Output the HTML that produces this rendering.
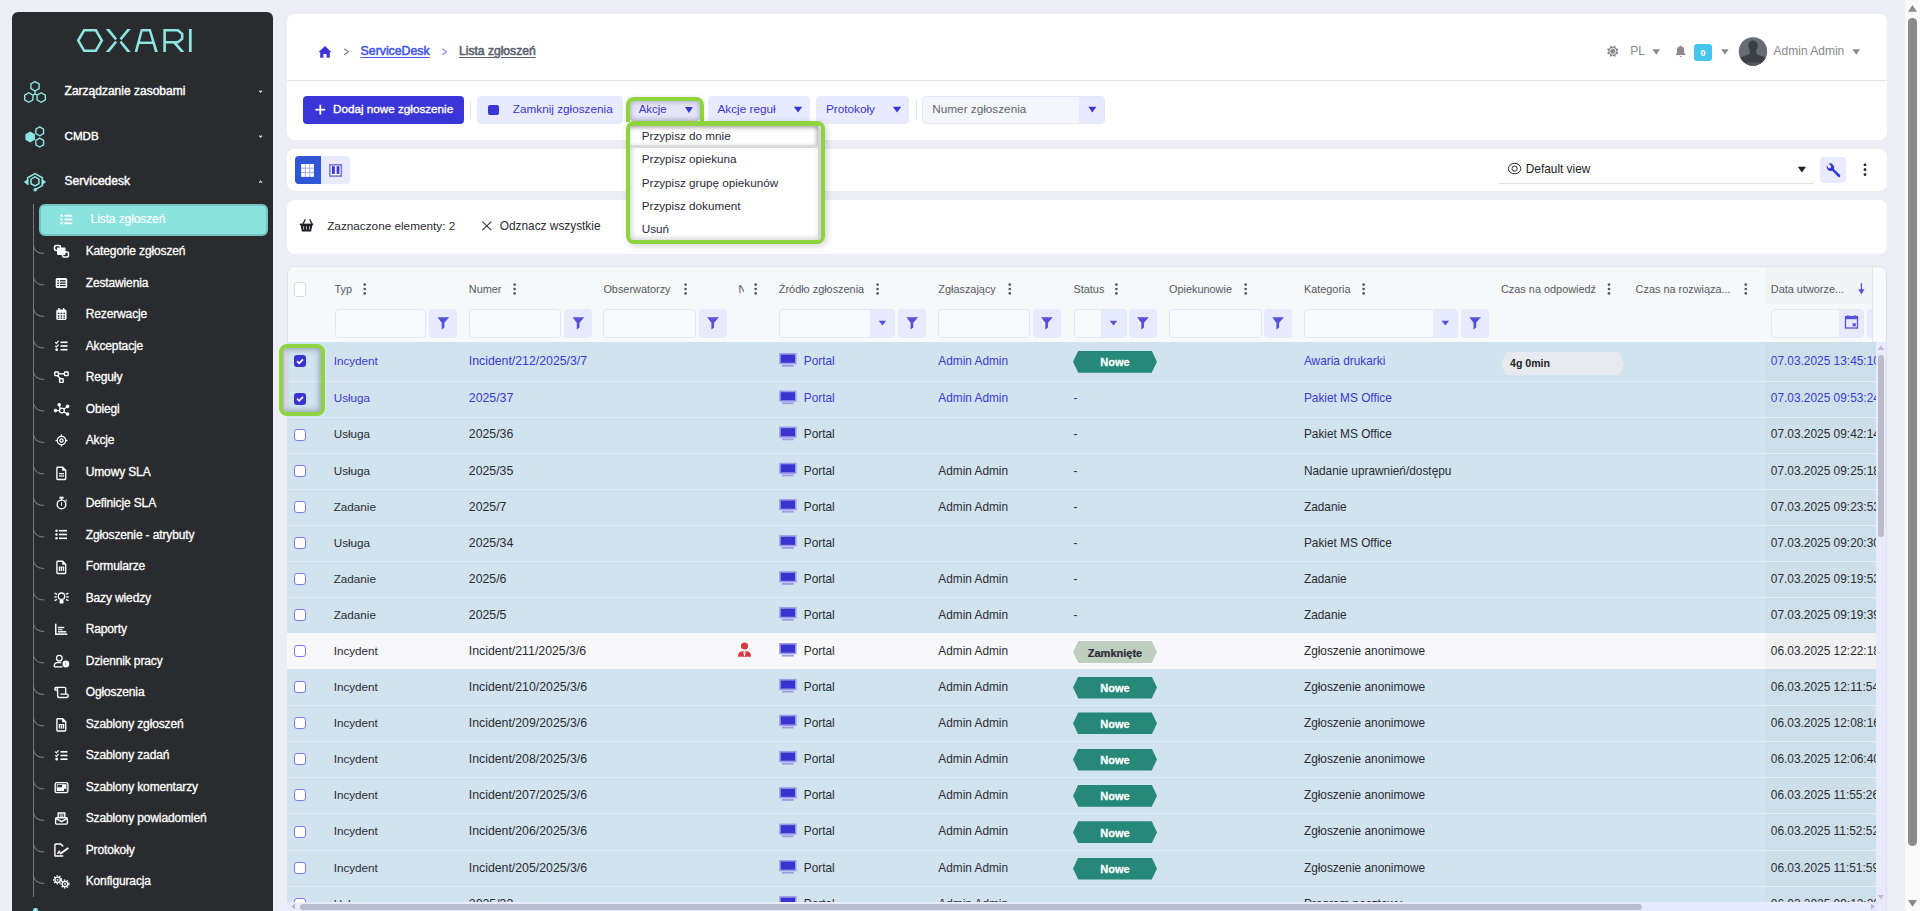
<!DOCTYPE html>
<html><head><meta charset="utf-8">
<style>
*{box-sizing:border-box;margin:0;padding:0}
html,body{width:1920px;height:911px;overflow:hidden}
body{position:relative;background:#ededf5;font-family:"Liberation Sans",sans-serif;}
.t{position:absolute;white-space:nowrap}
.abs{position:absolute}
.card{position:absolute;background:#fff;border-radius:8px}
svg{position:absolute;overflow:visible}
</style></head><body>

<div class="abs" style="left:12px;top:12px;width:261px;height:960px;background:#2a2b2e;border-radius:6px"></div>
<svg style="left:0;top:0" width="1920" height="911">
<g fill="none" stroke="#8de6e2" stroke-width="2.5">
<polygon points="78.2,40.5 84.1,30.3 95.9,30.3 101.8,40.5 95.9,50.7 84.1,50.7"/>
</g>
<g fill="#8de6e2">
<polygon points="105.8,29 109.4,29 117,38.6 115.2,40.2"/>
<polygon points="115.2,40.8 117,42.4 109.4,52 105.8,52"/>
<polygon points="130.8,29 127.2,29 119.6,38.6 121.4,40.2"/>
<polygon points="121.4,40.8 119.6,42.4 127.2,52 130.8,52"/>
<polygon points="134.6,52 140.8,29 150.8,29 157.8,52 155,52 149,31.6 142.6,31.6 137.3,52"/>
<rect x="138.3" y="41.6" width="15.6" height="2.4"/>
<rect x="163.3" y="29" width="2.6" height="23"/>
<rect x="188.9" y="29" width="2.8" height="23"/>
<rect x="174.4" y="42" width="1" height="1"/>
<polygon points="173,43 176.6,43 184.4,52 180.8,52"/>
</g>
<g fill="none" stroke="#8de6e2" stroke-width="2.5">
<polyline points="164.6,30.2 177.8,30.2 182.2,33.8 182.2,38.6 177.8,42.3 164.6,42.3"/>
</g></svg>
<svg style="left:0;top:0" width="1920" height="911"><g fill="none" stroke="#8de6e2" stroke-width="1.4" transform="translate(0,0)">
<polygon points="39.11,88.67 35.00,91.05 30.89,88.67 30.89,83.92 35.00,81.55 39.11,83.92"/>
<polygon points="32.91,99.88 28.80,102.25 24.69,99.88 24.69,95.12 28.80,92.75 32.91,95.12"/>
<polygon points="45.31,99.88 41.20,102.25 37.09,99.88 37.09,95.12 41.20,92.75 45.31,95.12"/>
<polyline points="32.9,95.2 35,94 37.1,95.2"/>
<line x1="35" y1="91" x2="35" y2="94"/>
<polygon points="43.55,133.53 39.70,135.75 35.85,133.53 35.85,129.08 39.70,126.85 43.55,129.08"/>
<polygon points="43.55,144.82 39.70,147.05 35.85,144.82 35.85,140.38 39.70,138.15 43.55,140.38"/>
</g>
<polygon fill="#8de6e2" points="34.96,139.65 30.20,142.40 25.44,139.65 25.44,134.15 30.20,131.40 34.96,134.15"/>
<g fill="none" stroke="#8de6e2" stroke-width="1.5">
<path d="M27.6,184.8 V177.8 L35,173.6 L42.4,177.8 V185.6 L35.6,189.4"/>
<polygon points="38.98,183.70 35.00,186.00 31.02,183.70 31.02,179.10 35.00,176.80 38.98,179.10"/>
</g>
<polygon fill="#8de6e2" points="23.8,182 28.4,178.8 28.4,185.2"/>
<polygon fill="#8de6e2" points="46.2,182 41.6,178.8 41.6,185.2"/>
<circle fill="#8de6e2" cx="35.2" cy="189.8" r="1.8"/>
</svg>
<div class="t" style="left:64.6px;top:82.8px;font-size:12px;line-height:16px;color:#ffffff;font-weight:normal;-webkit-text-stroke:0.4px #ffffff;">Zarządzanie zasobami</div>
<div class="t" style="left:64.6px;top:128.0px;font-size:11.6px;line-height:16px;color:#ffffff;font-weight:normal;-webkit-text-stroke:0.4px #ffffff;">CMDB</div>
<div class="t" style="left:64.6px;top:173.0px;font-size:12px;line-height:16px;color:#ffffff;font-weight:normal;-webkit-text-stroke:0.4px #ffffff;">Servicedesk</div>
<svg style="left:0;top:0" width="1920" height="911"><g fill="none" stroke="#d8d8d8" stroke-width="1.3">
<polyline points="259.2,90.6 260.6,92 262,90.6"/>
<polyline points="259.2,135.6 260.6,137 262,135.6"/>
<polyline points="259.2,182.6 260.6,181.2 262,182.6"/>

</g></svg>
<div class="abs" style="left:32.6px;top:204px;width:1.2px;height:693px;background:#777777"></div>
<div class="abs" style="left:39px;top:204px;width:229px;height:32px;background:#8ae3de;border:2px solid #74c4bf;border-radius:6px"></div>
<div class="t" style="left:90.6px;top:210.9px;font-size:12px;line-height:16px;color:#ffffff;font-weight:normal;-webkit-text-stroke:0.15px #ffffff;letter-spacing:-0.1px;">Lista zgłoszeń</div>
<div class="t" style="left:85.7px;top:243.0px;font-size:12px;line-height:16px;color:#ffffff;font-weight:normal;-webkit-text-stroke:0.3px #ffffff;letter-spacing:-0.13px;">Kategorie zgłoszeń</div>
<div class="t" style="left:85.7px;top:274.5px;font-size:12px;line-height:16px;color:#ffffff;font-weight:normal;-webkit-text-stroke:0.3px #ffffff;letter-spacing:-0.13px;">Zestawienia</div>
<div class="t" style="left:85.7px;top:306.0px;font-size:12px;line-height:16px;color:#ffffff;font-weight:normal;-webkit-text-stroke:0.3px #ffffff;letter-spacing:-0.13px;">Rezerwacje</div>
<div class="t" style="left:85.7px;top:337.5px;font-size:12px;line-height:16px;color:#ffffff;font-weight:normal;-webkit-text-stroke:0.3px #ffffff;letter-spacing:-0.13px;">Akceptacje</div>
<div class="t" style="left:85.7px;top:369.0px;font-size:12px;line-height:16px;color:#ffffff;font-weight:normal;-webkit-text-stroke:0.3px #ffffff;letter-spacing:-0.13px;">Reguły</div>
<div class="t" style="left:85.7px;top:400.5px;font-size:12px;line-height:16px;color:#ffffff;font-weight:normal;-webkit-text-stroke:0.3px #ffffff;letter-spacing:-0.13px;">Obiegi</div>
<div class="t" style="left:85.7px;top:432.0px;font-size:12px;line-height:16px;color:#ffffff;font-weight:normal;-webkit-text-stroke:0.3px #ffffff;letter-spacing:-0.13px;">Akcje</div>
<div class="t" style="left:85.7px;top:463.5px;font-size:12px;line-height:16px;color:#ffffff;font-weight:normal;-webkit-text-stroke:0.3px #ffffff;letter-spacing:-0.13px;">Umowy SLA</div>
<div class="t" style="left:85.7px;top:495.0px;font-size:12px;line-height:16px;color:#ffffff;font-weight:normal;-webkit-text-stroke:0.3px #ffffff;letter-spacing:-0.13px;">Definicje SLA</div>
<div class="t" style="left:85.7px;top:526.5px;font-size:12px;line-height:16px;color:#ffffff;font-weight:normal;-webkit-text-stroke:0.3px #ffffff;letter-spacing:-0.13px;">Zgłoszenie - atrybuty</div>
<div class="t" style="left:85.7px;top:558.0px;font-size:12px;line-height:16px;color:#ffffff;font-weight:normal;-webkit-text-stroke:0.3px #ffffff;letter-spacing:-0.13px;">Formularze</div>
<div class="t" style="left:85.7px;top:589.5px;font-size:12px;line-height:16px;color:#ffffff;font-weight:normal;-webkit-text-stroke:0.3px #ffffff;letter-spacing:-0.13px;">Bazy wiedzy</div>
<div class="t" style="left:85.7px;top:621.0px;font-size:12px;line-height:16px;color:#ffffff;font-weight:normal;-webkit-text-stroke:0.3px #ffffff;letter-spacing:-0.13px;">Raporty</div>
<div class="t" style="left:85.7px;top:652.5px;font-size:12px;line-height:16px;color:#ffffff;font-weight:normal;-webkit-text-stroke:0.3px #ffffff;letter-spacing:-0.13px;">Dziennik pracy</div>
<div class="t" style="left:85.7px;top:684.0px;font-size:12px;line-height:16px;color:#ffffff;font-weight:normal;-webkit-text-stroke:0.3px #ffffff;letter-spacing:-0.13px;">Ogłoszenia</div>
<div class="t" style="left:85.7px;top:715.5px;font-size:12px;line-height:16px;color:#ffffff;font-weight:normal;-webkit-text-stroke:0.3px #ffffff;letter-spacing:-0.13px;">Szablony zgłoszeń</div>
<div class="t" style="left:85.7px;top:747.0px;font-size:12px;line-height:16px;color:#ffffff;font-weight:normal;-webkit-text-stroke:0.3px #ffffff;letter-spacing:-0.13px;">Szablony zadań</div>
<div class="t" style="left:85.7px;top:778.5px;font-size:12px;line-height:16px;color:#ffffff;font-weight:normal;-webkit-text-stroke:0.3px #ffffff;letter-spacing:-0.13px;">Szablony komentarzy</div>
<div class="t" style="left:85.7px;top:810.0px;font-size:12px;line-height:16px;color:#ffffff;font-weight:normal;-webkit-text-stroke:0.3px #ffffff;letter-spacing:-0.13px;">Szablony powiadomień</div>
<div class="t" style="left:85.7px;top:841.5px;font-size:12px;line-height:16px;color:#ffffff;font-weight:normal;-webkit-text-stroke:0.3px #ffffff;letter-spacing:-0.13px;">Protokoły</div>
<div class="t" style="left:85.7px;top:873.0px;font-size:12px;line-height:16px;color:#ffffff;font-weight:normal;-webkit-text-stroke:0.3px #ffffff;letter-spacing:-0.13px;">Konfiguracja</div>
<svg style="left:0;top:0" width="1920" height="911"><g fill="none" stroke="#7a7a7a" stroke-width="1.1"><path d="M33.3,245.0 Q34.5,253.5 44.3,253.5"/><path d="M33.3,276.5 Q34.5,285.0 44.3,285.0"/><path d="M33.3,308.0 Q34.5,316.5 44.3,316.5"/><path d="M33.3,339.5 Q34.5,348.0 44.3,348.0"/><path d="M33.3,371.0 Q34.5,379.5 44.3,379.5"/><path d="M33.3,402.5 Q34.5,411.0 44.3,411.0"/><path d="M33.3,434.0 Q34.5,442.5 44.3,442.5"/><path d="M33.3,465.5 Q34.5,474.0 44.3,474.0"/><path d="M33.3,497.0 Q34.5,505.5 44.3,505.5"/><path d="M33.3,528.5 Q34.5,537.0 44.3,537.0"/><path d="M33.3,560.0 Q34.5,568.5 44.3,568.5"/><path d="M33.3,591.5 Q34.5,600.0 44.3,600.0"/><path d="M33.3,623.0 Q34.5,631.5 44.3,631.5"/><path d="M33.3,654.5 Q34.5,663.0 44.3,663.0"/><path d="M33.3,686.0 Q34.5,694.5 44.3,694.5"/><path d="M33.3,717.5 Q34.5,726.0 44.3,726.0"/><path d="M33.3,749.0 Q34.5,757.5 44.3,757.5"/><path d="M33.3,780.5 Q34.5,789.0 44.3,789.0"/><path d="M33.3,812.0 Q34.5,820.5 44.3,820.5"/><path d="M33.3,843.5 Q34.5,852.0 44.3,852.0"/><path d="M33.3,875.0 Q34.5,883.5 44.3,883.5"/></g></svg>
<svg style="left:0;top:0" width="1920" height="911"><g fill="#ffffff"><circle cx="61.6" cy="215.7" r="1.3"/><circle cx="61.6" cy="219.5" r="1.3"/><circle cx="61.6" cy="223.3" r="1.3"/><rect x="64.5" y="214.8" width="7.8" height="1.8"/><rect x="64.5" y="218.6" width="7.8" height="1.8"/><rect x="64.5" y="222.4" width="7.8" height="1.8"/></g><g fill="none" stroke="#ffffff" stroke-width="1.5"><rect x="54.5" y="245.5" width="6" height="5" rx="1.5"/><rect x="62.5" y="252.0" width="6" height="5" rx="1.5"/></g><rect fill="#ffffff" x="57" y="247.5" width="8.5" height="7.5" rx="1"/><g><rect x="55.7" y="277.9" width="11.5" height="10" rx="1.5" fill="#ffffff"/><g fill="#2a2b2e"><rect x="57.3" y="280.1" width="1.6" height="1.3"/><rect x="60" y="280.1" width="5.7" height="1.3"/><rect x="57.3" y="282.5" width="1.6" height="1.3"/><rect x="60" y="282.5" width="5.7" height="1.3"/><rect x="57.3" y="284.9" width="1.6" height="1.3"/><rect x="60" y="284.9" width="5.7" height="1.3"/></g></g><g><rect x="56.3" y="309.5" width="10.2" height="10.5" rx="1.5" fill="#ffffff"/><g fill="#2a2b2e"><rect x="57.8" y="312.7" width="1.6" height="1.4"/><rect x="60.6" y="312.7" width="1.6" height="1.4"/><rect x="63.4" y="312.7" width="1.6" height="1.4"/><rect x="57.8" y="315.3" width="1.6" height="1.4"/><rect x="60.6" y="315.3" width="1.6" height="1.4"/><rect x="63.4" y="315.3" width="1.6" height="1.4"/><rect x="57.8" y="317.6" width="1.6" height="1.2"/><rect x="60.6" y="317.6" width="1.6" height="1.2"/><rect x="63.4" y="317.6" width="1.6" height="1.2"/></g><rect x="58.3" y="308.0" width="1.4" height="2.5" fill="#ffffff"/><rect x="63" y="308.0" width="1.4" height="2.5" fill="#ffffff"/></g><g fill="#ffffff"><rect x="60.5" y="341.5" width="7" height="1.6"/><rect x="60.5" y="345.2" width="7" height="1.6"/><rect x="60.5" y="348.9" width="7" height="1.6"/></g><g fill="none" stroke="#ffffff" stroke-width="1.2"><polyline points="55.2,342.1 56.4,343.3 58.6,340.9"/><polyline points="55.2,345.8 56.4,347.0 58.6,344.6"/><circle cx="56.7" cy="349.7" r="0.8"/></g><g fill="none" stroke="#ffffff" stroke-width="1.4"><rect x="54.8" y="372.0" width="3.6" height="3.6" rx="0.6"/><rect x="64.5" y="372.0" width="3.6" height="3.6" rx="0.6"/><rect x="59.6" y="378.8" width="3.6" height="3.6" rx="0.6"/><line x1="58.4" y1="373.8" x2="64.5" y2="373.8"/><line x1="57.2" y1="375.6" x2="60.5" y2="378.8"/></g><circle cx="61.9" cy="410.60" r="2.4" fill="none" stroke="#ffffff" stroke-width="1.3"/><g stroke="#ffffff" stroke-width="1.2"><line x1="60.3" y1="408.80" x2="59.2" y2="404.80"/><line x1="63.8" y1="409.30" x2="67.6" y2="406.40"/><line x1="59.5" y1="410.60" x2="55.5" y2="410.60"/><line x1="63.8" y1="412.00" x2="67.6" y2="414.10"/></g><g fill="#ffffff"><circle cx="59.2" cy="404.80" r="1.8"/><circle cx="67.6" cy="406.40" r="1.8"/><circle cx="55.5" cy="410.60" r="1.8"/><circle cx="67.6" cy="414.10" r="1.8"/></g><g fill="none" stroke="#ffffff" stroke-width="1.3"><circle cx="61.5" cy="440.5" r="4.2"/><circle cx="61.5" cy="440.5" r="1.6"/><line x1="61.5" y1="434.5" x2="61.5" y2="436.3"/><line x1="61.5" y1="444.7" x2="61.5" y2="446.5"/><line x1="55.5" y1="440.5" x2="57.3" y2="440.5"/><line x1="65.7" y1="440.5" x2="67.5" y2="440.5"/></g><path fill="none" stroke="#ffffff" stroke-width="1.35" d="M57.7,467.20 h4.9 l3.1,3.1 v8.4 a0.8,0.8 0 0 1 -0.8,0.8 h-7.2 a0.8,0.8 0 0 1 -0.8,-0.8 v-10.7 a0.8,0.8 0 0 1 0.8,-0.8z"/><path fill="#ffffff" d="M62.2,467.20 l3.5,3.5 h-3.5z"/><g fill="#ffffff"><rect x="59" y="473.10" width="5" height="1.2"/><rect x="59" y="475.40" width="5" height="1.2"/></g><g fill="none" stroke="#ffffff" stroke-width="1.4"><circle cx="61.5" cy="504.40" r="4.3"/></g><rect fill="#ffffff" x="59.4" y="496.70" width="4.2" height="2"/><rect fill="#ffffff" x="61" y="498.50" width="1" height="1.5"/><rect fill="#ffffff" x="61.1" y="502.30" width="0.9" height="3.4"/><rect fill="#ffffff" x="65.6" y="499.60" width="1.2" height="1.8"/><g fill="#ffffff"><circle cx="56.5" cy="530.7" r="1.2"/><circle cx="56.5" cy="534.5" r="1.2"/><circle cx="56.5" cy="538.3" r="1.2"/><rect x="59" y="529.9" width="8" height="1.6"/><rect x="59" y="533.7" width="8" height="1.6"/><rect x="59" y="537.5" width="8" height="1.6"/></g><path fill="none" stroke="#ffffff" stroke-width="1.35" d="M57.7,561.20 h4.9 l3.1,3.1 v8.4 a0.8,0.8 0 0 1 -0.8,0.8 h-7.2 a0.8,0.8 0 0 1 -0.8,-0.8 v-10.7 a0.8,0.8 0 0 1 0.8,-0.8z"/><path fill="#ffffff" d="M62.2,561.20 l3.5,3.5 h-3.5z"/><rect x="58.8" y="566.60" width="5.4" height="4.4" fill="#ffffff"/><g fill="#2a2b2e"><rect x="60.3" y="567.50" width="0.7" height="3.5"/><rect x="62" y="567.50" width="0.7" height="3.5"/></g><g fill="none" stroke="#ffffff" stroke-width="1.3"><circle cx="61.5" cy="596.20" r="3.2"/></g><g stroke="#ffffff" stroke-width="1.3"><line x1="54.3" y1="596.90" x2="56.8" y2="596.90"/><line x1="66.2" y1="596.90" x2="68.7" y2="596.90"/><line x1="54.6" y1="593.10" x2="57" y2="594.30"/><line x1="68.4" y1="593.10" x2="66" y2="594.30"/><line x1="54.6" y1="600.60" x2="57" y2="599.40"/><line x1="68.4" y1="600.60" x2="66" y2="599.40"/></g><rect fill="#ffffff" x="59.5" y="600.10" width="4" height="3.5" rx="0.8"/><g fill="#ffffff"><rect x="55" y="623.70" width="1.5" height="11.2"/><rect x="55" y="633.40" width="12.3" height="1.5"/><rect x="58" y="626.80" width="6.3" height="1.4"/><rect x="58" y="628.90" width="4.6" height="1.4" opacity="0.8"/><rect x="58" y="631.10" width="8.2" height="1.4"/></g><g fill="none" stroke="#ffffff" stroke-width="1.3"><circle cx="59.3" cy="658.20" r="2.8"/><path d="M54.3,666.90 v-1.2 a3,3 0 0 1 3,-3 h4"/><line x1="54.3" y1="666.90" x2="62.5" y2="666.90"/></g><circle fill="#ffffff" cx="65.9" cy="664.00" r="3.4"/><path fill="none" stroke="#b88" stroke-width="0.8" d="M65.4,662.30 v2 h1.1"/><g fill="none" stroke="#ffffff" stroke-width="1.35"><path d="M57.6,689.50 V696.00 a1.5,1.5 0 0 0 1.5,1.5 h7.5 a1.7,1.7 0 0 0 0,-3.4 h-6.3"/><path d="M56.3,687.30 h8.4 a1,1 0 0 1 1,1 v5.6"/><circle cx="56.2" cy="688.90" r="1.4"/></g><path fill="none" stroke="#ffffff" stroke-width="1.35" d="M57.7,718.70 h4.9 l3.1,3.1 v8.4 a0.8,0.8 0 0 1 -0.8,0.8 h-7.2 a0.8,0.8 0 0 1 -0.8,-0.8 v-10.7 a0.8,0.8 0 0 1 0.8,-0.8z"/><path fill="#ffffff" d="M62.2,718.70 l3.5,3.5 h-3.5z"/><rect x="58.8" y="724.10" width="5.4" height="4.4" fill="#ffffff"/><g fill="#2a2b2e"><rect x="60.3" y="725.00" width="0.7" height="3.5"/><rect x="62" y="725.00" width="0.7" height="3.5"/></g><g fill="#ffffff"><rect x="60.5" y="751.0" width="7" height="1.6"/><rect x="60.5" y="754.7" width="7" height="1.6"/><rect x="60.5" y="758.4" width="7" height="1.6"/></g><g fill="none" stroke="#ffffff" stroke-width="1.2"><polyline points="55.2,751.6 56.4,752.8 58.6,750.4"/><polyline points="55.2,755.3 56.4,756.5 58.6,754.1"/><circle cx="56.7" cy="759.2" r="0.8"/></g><rect x="55.2" y="782.60" width="12.7" height="10" rx="1.6" fill="none" stroke="#ffffff" stroke-width="1.35"/><rect x="56.8" y="784.20" width="9.6" height="6.9" fill="#ffffff"/><rect x="57.5" y="784.90" width="4.6" height="2.4" fill="#2a2b2e"/><rect x="64" y="788.90" width="2.4" height="2.2" fill="#2a2b2e"/><g fill="none" stroke="#ffffff" stroke-width="1.35"><path d="M58.2,817.50 V813.00 h6.6 V817.50"/><rect x="55.6" y="817.70" width="11.8" height="6.4" rx="1"/><polyline points="56.2,818.60 61.5,821.60 66.8,818.60"/></g><g fill="#ffffff"><rect x="59.6" y="814.50" width="3.8" height="1"/><rect x="59.6" y="816.40" width="3.8" height="1"/></g><g fill="none" stroke="#ffffff" stroke-width="1.4"><path d="M63.3,856.00 h-7.6 a0.8,0.8 0 0 1 -0.8,-0.8 v-10.4 a0.8,0.8 0 0 1 0.8,-0.8 h5 l2.6,2.6"/><path d="M57.5,854.00 l1.6,-2.8 1.2,1.6"/></g><path fill="none" stroke="#ffffff" stroke-width="2" d="M60,854.00 L68.3,848.00"/><g fill="none" stroke="#ffffff" stroke-width="1.3"><circle cx="57.6" cy="879.80" r="2.7"/><circle cx="65" cy="884.00" r="2.7"/></g><g fill="none" stroke="#ffffff" stroke-width="1.4" stroke-dasharray="1.3 1.5"><circle cx="57.6" cy="879.80" r="3.9"/><circle cx="65" cy="884.00" r="3.9"/></g><circle cx="57.6" cy="879.80" r="0.9" fill="#ffffff"/><circle cx="65" cy="884.00" r="0.9" fill="#ffffff"/></svg>
<div class="abs" style="left:33px;top:908px;width:5px;height:4px;background:#8de6e2;border-radius:2px 2px 0 0"></div>
<div class="card" style="left:287px;top:14px;width:1600px;height:126px"></div>
<div class="abs" style="left:287px;top:80px;width:1600px;height:1px;background:#e2e4ec"></div>
<svg style="left:0;top:0" width="1920" height="911">
<path fill="#3a35d6" d="M325,46 L331.6,52.2 L329.8,52.2 L329.8,57.8 L326.6,57.8 L326.6,54 L323.4,54 L323.4,57.8 L320.2,57.8 L320.2,52.2 L318.4,52.2 Z"/>
<polyline fill="none" stroke="#777" stroke-width="1.1" points="344.2,48.8 348.4,51.8 344.2,54.8"/>
<polyline fill="none" stroke="#8b86e8" stroke-width="1.1" points="442.3,48.8 446.5,51.8 442.3,54.8"/>
</svg>
<div class="t" style="left:360.6px;top:43.0px;font-size:12.3px;line-height:16px;color:#4457ee;font-weight:normal;-webkit-text-stroke:0.55px #4457ee;text-decoration:underline;text-underline-offset:2px">ServiceDesk</div>
<div class="t" style="left:459px;top:43.0px;font-size:12.1px;line-height:16px;color:#5a606c;font-weight:normal;-webkit-text-stroke:0.55px #5a606c;text-decoration:underline;text-underline-offset:2px">Lista zgłoszeń</div>
<svg style="left:0;top:0" width="1920" height="911">
<polygon fill="#8a8a8a" points="1615.21,45.43 1615.84,48.21 1618.62,48.84 1617.10,51.25 1618.62,53.66 1615.84,54.29 1615.21,57.07 1612.80,55.55 1610.39,57.07 1609.76,54.29 1606.98,53.66 1608.50,51.25 1606.98,48.84 1609.76,48.21 1610.39,45.43 1612.80,46.95"/><circle cx="1612.8" cy="51.25" r="3" fill="none" stroke="#fff" stroke-width="0.9"/><circle cx="1612.8" cy="51.25" r="1.9" fill="#8a8a8a"/>
<polygon fill="#8a8a8a" points="1652.5,49.3 1660,49.3 1656.25,54.8"/>
<path fill="#8a8a8a" d="M1680.6,45.3 l0.6,1 a3.7,3.7 0 0 1 3,3.6 v3.2 l1.6,1.8 v0.2 h-10.4 v-0.2 l1.6,-1.8 v-3.2 a3.7,3.7 0 0 1 3,-3.6z M1679.6,56 h2 l-0.4,1.1 h-1.2z"/>
<polygon fill="#8a8a8a" points="1721.2,49.3 1728.7,49.3 1724.95,54.8"/>
<polygon fill="#8a8a8a" points="1852.5,49.3 1860,49.3 1856.25,54.8"/>
<defs><clipPath id="av"><circle cx="1753" cy="51.4" r="14.2"/></clipPath></defs>
<circle cx="1753" cy="51.4" r="14.2" fill="#666c74"/>
<g clip-path="url(#av)" fill="#3c3f43"><path d="M1753,40.6 c3,0 4.6,2.2 4.6,5.2 c0,3.4 -1.8,6.4 -4.6,6.4 c-2.8,0 -4.6,-3 -4.6,-6.4 c0,-3 1.6,-5.2 4.6,-5.2z"/><path d="M1749.8,51 v3.2 l-7,2.4 c-2.2,0.8 -3,2.5 -3.2,4.6 v6 h27 v-6 c-0.2,-2.1 -1,-3.8 -3.2,-4.6 l-7,-2.4 v-3.2 z"/><rect x="1738" y="62.5" width="30" height="5" fill="#54585d"/></g>
</svg>
<div class="abs" style="left:1694px;top:44px;width:18px;height:17px;background:#46c6ee;border-radius:3px"></div>
<div class="t" style="left:1694px;top:44.8px;font-size:9px;line-height:16px;color:#ffffff;font-weight:bold;width:18px;text-align:center">0</div>
<div class="t" style="left:1630.3px;top:42.8px;font-size:12px;line-height:16px;color:#8a8a8a;font-weight:normal;">PL</div>
<div class="t" style="left:1773.6px;top:42.9px;font-size:12px;line-height:16px;color:#8a8a8a;font-weight:normal;">Admin Admin</div>
<div class="abs" style="left:303px;top:96px;width:161px;height:28px;background:#3a35d6;border-radius:4px"></div>
<svg style="left:0;top:0" width="1920" height="911"><g stroke="#fff" stroke-width="1.8"><line x1="320.3" y1="104.8" x2="320.3" y2="114.6"/><line x1="315.4" y1="109.7" x2="325.2" y2="109.7"/></g></svg>
<div class="t" style="left:333px;top:100.6px;font-size:11.7px;line-height:16px;color:#ffffff;font-weight:normal;-webkit-text-stroke:0.35px #ffffff;">Dodaj nowe zgłoszenie</div>
<div class="abs" style="left:470px;top:101px;width:1px;height:18px;background:#e3e4ea"></div>
<div class="abs" style="left:477px;top:96px;width:145.5px;height:28px;background:#e8ebfd;border-radius:4px"></div>
<div class="abs" style="left:488px;top:104.6px;width:11px;height:10px;background:#3a35d6;border-radius:2px"></div>
<div class="t" style="left:512.8px;top:100.6px;font-size:11.75px;line-height:16px;color:#3a35d6;font-weight:normal;">Zamknij zgłoszenia</div>
<div class="abs" style="left:629.6px;top:101.3px;width:70.8px;height:20.2px;background:#e4e6f8;border-radius:3px;box-shadow:inset 0 0 5px 1px rgba(60,60,90,0.32)"></div>
<div class="abs" style="left:625.6px;top:97.3px;width:78.8px;height:25px;border:4px solid #8dd43f;border-bottom:0;border-radius:8px 8px 0 0;box-shadow:0 0 4px rgba(0,0,0,0.12)"></div>
<div class="t" style="left:638.7px;top:100.6px;font-size:11.4px;line-height:16px;color:#3a35d6;font-weight:normal;">Akcje</div>
<svg style="left:0;top:0" width="1920" height="911"><polygon fill="#3a35d6" points="684.9,107.1 693,107.1 688.95,113"/></svg>
<div class="abs" style="left:708px;top:96px;width:102px;height:28px;background:#e8ebfd;border-radius:4px"></div>
<div class="t" style="left:717.5px;top:100.6px;font-size:11.75px;line-height:16px;color:#3a35d6;font-weight:normal;">Akcje reguł</div>
<svg style="left:0;top:0" width="1920" height="911"><polygon fill="#3a35d6" points="793.8,106.8 802.3,106.8 798.05,112.6"/></svg>
<div class="abs" style="left:816px;top:96px;width:92.5px;height:28px;background:#e8ebfd;border-radius:4px"></div>
<div class="t" style="left:826px;top:100.6px;font-size:11.75px;line-height:16px;color:#3a35d6;font-weight:normal;">Protokoły</div>
<svg style="left:0;top:0" width="1920" height="911"><polygon fill="#3a35d6" points="892.8,106.8 901.3,106.8 897.05,112.6"/></svg>
<div class="abs" style="left:915.5px;top:101px;width:1px;height:18px;background:#e3e4ea"></div>
<div class="abs" style="left:922px;top:96px;width:182.5px;height:28px;background:#f5f6fb;border:1px solid #e4e7f7;border-radius:4px;overflow:hidden"><div class="abs" style="right:0;top:0;width:25px;height:26px;background:#e8ebfd"></div></div>
<div class="t" style="left:932.3px;top:100.6px;font-size:11.75px;line-height:16px;color:#62656d;font-weight:normal;">Numer zgłoszenia</div>
<svg style="left:0;top:0" width="1920" height="911"><polygon fill="#3a35d6" points="1088.3,106.8 1096.3,106.8 1092.3,112.6"/></svg>
<div class="card" style="left:287px;top:149px;width:1600px;height:42px"></div>
<div class="abs" style="left:294.5px;top:156.3px;width:55.3px;height:27.4px;background:#e8ebfd;border-radius:4px;overflow:hidden"><div class="abs" style="left:0;top:0;width:26.5px;height:27.4px;background:#2f56d4"></div></div>
<svg style="left:0;top:0" width="1920" height="911">
<rect x="301.2" y="164" width="12.7" height="12.8" fill="#8ea3ea"/>
<g fill="#fff">
<rect x="301.2" y="164" width="3.7" height="3.7"/><rect x="305.7" y="164" width="3.7" height="3.7"/><rect x="310.2" y="164" width="3.7" height="3.7"/>
<rect x="301.2" y="168.55" width="3.7" height="3.7"/><rect x="305.7" y="168.55" width="3.7" height="3.7"/><rect x="310.2" y="168.55" width="3.7" height="3.7"/>
<rect x="301.2" y="173.1" width="3.7" height="3.7"/><rect x="305.7" y="173.1" width="3.7" height="3.7"/><rect x="310.2" y="173.1" width="3.7" height="3.7"/>
</g>
<rect x="329.9" y="164.8" width="11.4" height="11.3" fill="#fff" stroke="#7b78e0" stroke-width="1.6"/>
<rect x="331.9" y="166.2" width="2.9" height="7.7" fill="#3a35d6"/><rect x="336.6" y="166.2" width="2.8" height="7.7" fill="#3a35d6"/>
</svg>
<svg style="left:0;top:0" width="1920" height="911">
<g fill="none" stroke="#2a2a2a" stroke-width="1"><ellipse cx="1514.6" cy="168.6" rx="6.2" ry="5.2"/><circle cx="1514.6" cy="168.6" r="2.6"/></g>
<polygon fill="#222" points="1797.8,166.8 1806,166.8 1801.9,172.6"/>
</svg>
<div class="t" style="left:1525.8px;top:161.0px;font-size:11.85px;line-height:16px;color:#222222;font-weight:normal;">Default view</div>
<div class="abs" style="left:1499px;top:183px;width:315px;height:1px;background:#dfe2ea"></div>
<div class="abs" style="left:1820px;top:157px;width:26px;height:26px;background:#e8ebfd;border-radius:4px"></div>
<svg style="left:0;top:0" width="1920" height="911">
<path fill="#3a35d6" d="M1826.8,165.4 a4.2,4.2 0 0 0 5.4,5.3 l5.8,6 a1.3,1.3 0 0 0 1.9,-1.9 l-6,-5.8 a4.2,4.2 0 0 0 -5.3,-5.4 l2.6,2.6 -0.6,1.8 -1.8,0.6z"/>
<g fill="#222"><circle cx="1865" cy="164.8" r="1.4"/><circle cx="1865" cy="169.7" r="1.4"/><circle cx="1865" cy="174.6" r="1.4"/></g>
</svg>
<div class="card" style="left:287px;top:200px;width:1600px;height:54px"></div>
<svg style="left:0;top:0" width="1920" height="911">
<rect x="299.8" y="223.6" width="13.4" height="1.6" fill="#1e1f24"/>
<path fill="#1e1f24" d="M300.6,225 h11.8 l-1.3,6.5 h-9.2z"/>
<g fill="#c8c8cc"><rect x="303.2" y="226.2" width="0.9" height="3.4"/><rect x="306.1" y="226.2" width="0.9" height="3.4"/><rect x="309" y="226.2" width="0.9" height="3.4"/></g>
<g stroke="#1e1f24" stroke-width="1.3"><line x1="302.9" y1="224" x2="305.4" y2="219.3"/><line x1="309.6" y1="219.3" x2="312.1" y2="224"/></g>
<g stroke="#333" stroke-width="1.1"><line x1="482.3" y1="221.6" x2="491.3" y2="230.2"/><line x1="491.3" y1="221.6" x2="482.3" y2="230.2"/></g>
</svg>
<div class="t" style="left:327.2px;top:218.0px;font-size:11.75px;line-height:16px;color:#2b2b33;font-weight:normal;">Zaznaczone elementy: 2</div>
<div class="t" style="left:499.8px;top:218.0px;font-size:11.85px;line-height:16px;color:#2b2b33;font-weight:normal;">Odznacz wszystkie</div>
<div class="abs" style="left:287px;top:266px;width:1600px;height:660px;background:#f8f9fb;border:1px solid #e1e3e8;border-radius:8px 8px 0 0;overflow:hidden"><div class="abs" style="left:0;top:0;width:1584px;height:76px;background:#f7f8fa"></div><div class="abs" style="left:1477px;top:0;width:107px;height:37px;background:#f2f3f5"></div><div class="abs" style="left:1584px;top:0;width:1px;height:76px;background:#e3e5ea"></div></div>
<div class="abs" style="left:294px;top:282px;width:12px;height:15px;background:#fff;border:1px solid #d6dbe1;border-radius:3px"></div>
<div class="t" style="left:334.5px;top:281.0px;font-size:10.9px;line-height:16px;color:#555a63;font-weight:normal;">Typ</div>
<div class="abs" style="left:334.5px;top:309.2px;width:91.7px;height:28.6px;background:#f9fafd;border:1px solid #e1e6fa;border-radius:4px;overflow:hidden"></div>
<div class="abs" style="left:429.3px;top:309.2px;width:28px;height:28.6px;background:#e8ebfd;border-radius:4px"></div>
<div class="t" style="left:468.8px;top:281.0px;font-size:10.9px;line-height:16px;color:#555a63;font-weight:normal;">Numer</div>
<div class="abs" style="left:468.8px;top:309.2px;width:92.3px;height:28.6px;background:#f9fafd;border:1px solid #e1e6fa;border-radius:4px;overflow:hidden"></div>
<div class="abs" style="left:564.4px;top:309.2px;width:28px;height:28.6px;background:#e8ebfd;border-radius:4px"></div>
<div class="t" style="left:603.4px;top:281.0px;font-size:10.9px;line-height:16px;color:#555a63;font-weight:normal;">Obserwatorzy</div>
<div class="abs" style="left:603.4px;top:309.2px;width:93.1px;height:28.6px;background:#f9fafd;border:1px solid #e1e6fa;border-radius:4px;overflow:hidden"></div>
<div class="abs" style="left:699px;top:309.2px;width:28px;height:28.6px;background:#e8ebfd;border-radius:4px"></div>
<div class="t" style="left:738.4px;top:281px;width:6px;overflow:hidden;font-size:11px;line-height:16px;color:#555a63">N</div>
<div class="t" style="left:778.8px;top:281.0px;font-size:10.9px;line-height:16px;color:#555a63;font-weight:normal;">Źródło zgłoszenia</div>
<div class="abs" style="left:778.8px;top:309.2px;width:116.6px;height:28.6px;background:#f9fafd;border:1px solid #e1e6fa;border-radius:4px;overflow:hidden"><div class="abs" style="left:90.5px;top:0;width:25.1px;height:27px;background:#e8ebfd"></div></div>
<div class="abs" style="left:898.2px;top:309.2px;width:28px;height:28.6px;background:#e8ebfd;border-radius:4px"></div>
<div class="t" style="left:938.3px;top:281.0px;font-size:10.9px;line-height:16px;color:#555a63;font-weight:normal;">Zgłaszający</div>
<div class="abs" style="left:938.3px;top:309.2px;width:92.0px;height:28.6px;background:#f9fafd;border:1px solid #e1e6fa;border-radius:4px;overflow:hidden"></div>
<div class="abs" style="left:1032.9px;top:309.2px;width:28px;height:28.6px;background:#e8ebfd;border-radius:4px"></div>
<div class="t" style="left:1073.5px;top:281.0px;font-size:10.9px;line-height:16px;color:#555a63;font-weight:normal;">Status</div>
<div class="abs" style="left:1073.5px;top:309.2px;width:53.3px;height:28.6px;background:#f9fafd;border:1px solid #e1e6fa;border-radius:4px;overflow:hidden"><div class="abs" style="left:26.5px;top:0;width:25.8px;height:27px;background:#e8ebfd"></div></div>
<div class="abs" style="left:1128.9px;top:309.2px;width:28px;height:28.6px;background:#e8ebfd;border-radius:4px"></div>
<div class="t" style="left:1169px;top:281.0px;font-size:10.9px;line-height:16px;color:#555a63;font-weight:normal;">Opiekunowie</div>
<div class="abs" style="left:1169px;top:309.2px;width:92.8px;height:28.6px;background:#f9fafd;border:1px solid #e1e6fa;border-radius:4px;overflow:hidden"></div>
<div class="abs" style="left:1264px;top:309.2px;width:28px;height:28.6px;background:#e8ebfd;border-radius:4px"></div>
<div class="t" style="left:1303.9px;top:281.0px;font-size:10.9px;line-height:16px;color:#555a63;font-weight:normal;">Kategoria</div>
<div class="abs" style="left:1303.9px;top:309.2px;width:154.6px;height:28.6px;background:#f9fafd;border:1px solid #e1e6fa;border-radius:4px;overflow:hidden"><div class="abs" style="left:128.1px;top:0;width:25.5px;height:27px;background:#e8ebfd"></div></div>
<div class="abs" style="left:1461.1px;top:309.2px;width:28px;height:28.6px;background:#e8ebfd;border-radius:4px"></div>
<div class="t" style="left:1501px;top:281.0px;font-size:10.9px;line-height:16px;color:#555a63;font-weight:normal;">Czas na odpowiedź</div>
<div class="t" style="left:1635.6px;top:281.0px;font-size:10.9px;line-height:16px;color:#555a63;font-weight:normal;">Czas na rozwiąza...</div>
<div class="t" style="left:1770.8px;top:281.0px;font-size:10.9px;line-height:16px;color:#555a63;font-weight:normal;">Data utworze...</div>
<div class="abs" style="left:1770.8px;top:309px;width:93px;height:29px;background:#f8f9fc;border:1px solid #e3e7f8;border-radius:4px;overflow:hidden"><div class="abs" style="left:67px;top:0;width:26px;height:27px;background:#e8ebfd"></div></div>
<div class="abs" style="left:1867px;top:309px;width:5px;height:29px;background:#e8ebfd;border-radius:4px 0 0 4px"></div>
<svg style="left:0;top:0" width="1920" height="911"><g fill="#555a63"></g><g fill="#555a63"><circle cx="364.7" cy="284.6" r="1.35"/><circle cx="364.7" cy="289" r="1.35"/><circle cx="364.7" cy="293.4" r="1.35"/></g><path fill="#5651d8" d="M437.5,317.3 h11.7 l-4.8,5.5 v4.6 l-2.7,2.2 v-6.8z"/><g fill="#555a63"><circle cx="514.6" cy="284.6" r="1.35"/><circle cx="514.6" cy="289" r="1.35"/><circle cx="514.6" cy="293.4" r="1.35"/></g><path fill="#5651d8" d="M572.6,317.3 h11.7 l-4.8,5.5 v4.6 l-2.7,2.2 v-6.8z"/><g fill="#555a63"><circle cx="685.6" cy="284.6" r="1.35"/><circle cx="685.6" cy="289" r="1.35"/><circle cx="685.6" cy="293.4" r="1.35"/></g><path fill="#5651d8" d="M707.2,317.3 h11.7 l-4.8,5.5 v4.6 l-2.7,2.2 v-6.8z"/><g fill="#555a63"><circle cx="755.7" cy="284.6" r="1.35"/><circle cx="755.7" cy="289" r="1.35"/><circle cx="755.7" cy="293.4" r="1.35"/></g><g fill="#555a63"><circle cx="877.6" cy="284.6" r="1.35"/><circle cx="877.6" cy="289" r="1.35"/><circle cx="877.6" cy="293.4" r="1.35"/></g><polygon fill="#5651d8" points="878.7,320.7 886.2,320.7 882.5,325.6" /><path fill="#5651d8" d="M906.4,317.3 h11.7 l-4.8,5.5 v4.6 l-2.7,2.2 v-6.8z"/><g fill="#555a63"><circle cx="1009.8" cy="284.6" r="1.35"/><circle cx="1009.8" cy="289" r="1.35"/><circle cx="1009.8" cy="293.4" r="1.35"/></g><path fill="#5651d8" d="M1041.1,317.3 h11.7 l-4.8,5.5 v4.6 l-2.7,2.2 v-6.8z"/><g fill="#555a63"><circle cx="1116.4" cy="284.6" r="1.35"/><circle cx="1116.4" cy="289" r="1.35"/><circle cx="1116.4" cy="293.4" r="1.35"/></g><polygon fill="#5651d8" points="1109.7,320.7 1117.3,320.7 1113.5,325.6" /><path fill="#5651d8" d="M1137.1,317.3 h11.7 l-4.8,5.5 v4.6 l-2.7,2.2 v-6.8z"/><g fill="#555a63"><circle cx="1245.7" cy="284.6" r="1.35"/><circle cx="1245.7" cy="289" r="1.35"/><circle cx="1245.7" cy="293.4" r="1.35"/></g><path fill="#5651d8" d="M1272.2,317.3 h11.7 l-4.8,5.5 v4.6 l-2.7,2.2 v-6.8z"/><g fill="#555a63"><circle cx="1363.6" cy="284.6" r="1.35"/><circle cx="1363.6" cy="289" r="1.35"/><circle cx="1363.6" cy="293.4" r="1.35"/></g><polygon fill="#5651d8" points="1441.5,320.7 1449.1,320.7 1445.3,325.6" /><path fill="#5651d8" d="M1469.3,317.3 h11.7 l-4.8,5.5 v4.6 l-2.7,2.2 v-6.8z"/><g fill="#555a63"><circle cx="1609" cy="284.6" r="1.35"/><circle cx="1609" cy="289" r="1.35"/><circle cx="1609" cy="293.4" r="1.35"/></g><g fill="#555a63"><circle cx="1745.8" cy="284.6" r="1.35"/><circle cx="1745.8" cy="289" r="1.35"/><circle cx="1745.8" cy="293.4" r="1.35"/></g><line x1="1861.4" y1="283.2" x2="1861.4" y2="290" stroke="#5651d8" stroke-width="1.3"/><polygon fill="#5651d8" points="1858.2,289.3 1864.6,289.3 1861.4,294.2"/><g fill="none" stroke="#5651d8" stroke-width="1.3"><rect x="1845.5" y="316.6" width="12" height="11.4"/></g><rect x="1845.5" y="316.6" width="12" height="2.6" fill="#5651d8"/><rect x="1852.6" y="323.3" width="3.2" height="3" fill="#5651d8"/><g stroke="#5651d8" stroke-width="1.2"><line x1="1848" y1="315" x2="1848" y2="317"/><line x1="1855" y1="315" x2="1855" y2="317"/></g></svg>
<div class="abs" style="left:287px;top:342px;width:1589px;height:560px;overflow:hidden"><div class="abs" style="left:-287px;top:-342px;width:1920px;height:1000px">
<div class="abs" style="left:287px;top:342px;width:1589px;height:39.0px;background:#d0e3ef"></div>
<div class="abs" style="left:1765px;top:342px;width:111px;height:39.0px;background:#cde0ea"></div>
<div class="abs" style="left:294px;top:355.3px;width:12px;height:12px;background:#3a33d0;border-radius:3px"></div>
<div class="t" style="left:333.7px;top:352.9px;font-size:11.7px;line-height:16px;color:#3d3ad6;font-weight:normal;">Incydent</div>
<div class="t" style="left:468.8px;top:352.9px;font-size:12.3px;line-height:16px;color:#3d3ad6;font-weight:normal;">Incident/212/2025/3/7</div>
<div class="t" style="left:803.75px;top:352.9px;font-size:11.85px;line-height:16px;color:#3d3ad6;font-weight:normal;">Portal</div>
<div class="t" style="left:938.3px;top:352.9px;font-size:11.85px;line-height:16px;color:#3d3ad6;font-weight:normal;">Admin Admin</div>
<div class="abs" style="left:1073px;top:350.7px;width:84px;height:22px;background:#258878;clip-path:polygon(5.3px 0,78.7px 0,84px 50%,78.7px 100%,5.3px 100%,0 50%)"></div>
<div class="t" style="left:1073px;top:354.2px;font-size:11px;line-height:16px;color:#ffffff;font-weight:bold;-webkit-text-stroke:0.3px #ffffff;width:84px;text-align:center">Nowe</div>
<div class="t" style="left:1303.9px;top:352.9px;font-size:11.85px;line-height:16px;color:#3d3ad6;font-weight:normal;">Awaria drukarki</div>
<div class="abs" style="left:1501.2px;top:352.1px;width:123px;height:23px;background:#e6eaee;clip-path:polygon(5px 0,118px 0,123px 50%,118px 100%,5px 100%,0 50%)"></div>
<div class="t" style="left:1510px;top:355.2px;font-size:10.6px;line-height:16px;color:#222222;font-weight:bold;">4g 0min</div>
<div class="t" style="left:1770.8px;top:352.9px;font-size:11.9px;line-height:16px;color:#3d3ad6;font-weight:normal;">07.03.2025 13:45:10</div>
<div class="abs" style="left:287px;top:381px;width:1589px;height:36.0px;background:#d0e3ef"></div>
<div class="abs" style="left:1765px;top:381px;width:111px;height:36.0px;background:#cde0ea"></div>
<div class="abs" style="left:287px;top:380.5px;width:1589px;height:1px;background:#e4edf2"></div>
<div class="abs" style="left:294px;top:392.8px;width:12px;height:12px;background:#3a33d0;border-radius:3px"></div>
<div class="t" style="left:333.7px;top:390.4px;font-size:11.7px;line-height:16px;color:#3d3ad6;font-weight:normal;">Usługa</div>
<div class="t" style="left:468.8px;top:390.4px;font-size:12.3px;line-height:16px;color:#3d3ad6;font-weight:normal;">2025/37</div>
<div class="t" style="left:803.75px;top:390.4px;font-size:11.85px;line-height:16px;color:#3d3ad6;font-weight:normal;">Portal</div>
<div class="t" style="left:938.3px;top:390.4px;font-size:11.85px;line-height:16px;color:#3d3ad6;font-weight:normal;">Admin Admin</div>
<div class="t" style="left:1073.5px;top:390.4px;font-size:12px;line-height:16px;color:#3d3ad6;font-weight:normal;">-</div>
<div class="t" style="left:1303.9px;top:390.4px;font-size:11.85px;line-height:16px;color:#3d3ad6;font-weight:normal;">Pakiet MS Office</div>
<div class="t" style="left:1770.8px;top:390.4px;font-size:11.9px;line-height:16px;color:#3d3ad6;font-weight:normal;">07.03.2025 09:53:24</div>
<div class="abs" style="left:287px;top:417px;width:1589px;height:36.0px;background:#d0e3ef"></div>
<div class="abs" style="left:1765px;top:417px;width:111px;height:36.0px;background:#cde0ea"></div>
<div class="abs" style="left:287px;top:416.5px;width:1589px;height:1px;background:#e4edf2"></div>
<div class="abs" style="left:294px;top:428.8px;width:12px;height:12px;background:#fff;border:1.3px solid #7c79ee;border-radius:3px"></div>
<div class="t" style="left:333.7px;top:426.4px;font-size:11.7px;line-height:16px;color:#2b2b33;font-weight:normal;">Usługa</div>
<div class="t" style="left:468.8px;top:426.4px;font-size:12.3px;line-height:16px;color:#2b2b33;font-weight:normal;">2025/36</div>
<div class="t" style="left:803.75px;top:426.4px;font-size:11.85px;line-height:16px;color:#2b2b33;font-weight:normal;">Portal</div>
<div class="t" style="left:1073.5px;top:426.4px;font-size:12px;line-height:16px;color:#2b2b33;font-weight:normal;">-</div>
<div class="t" style="left:1303.9px;top:426.4px;font-size:11.85px;line-height:16px;color:#2b2b33;font-weight:normal;">Pakiet MS Office</div>
<div class="t" style="left:1770.8px;top:426.4px;font-size:11.9px;line-height:16px;color:#2b2b33;font-weight:normal;">07.03.2025 09:42:14</div>
<div class="abs" style="left:287px;top:453px;width:1589px;height:36.3px;background:#d0e3ef"></div>
<div class="abs" style="left:1765px;top:453px;width:111px;height:36.3px;background:#cde0ea"></div>
<div class="abs" style="left:287px;top:452.5px;width:1589px;height:1px;background:#e4edf2"></div>
<div class="abs" style="left:294px;top:464.9px;width:12px;height:12px;background:#fff;border:1.3px solid #7c79ee;border-radius:3px"></div>
<div class="t" style="left:333.7px;top:462.54999999999995px;font-size:11.7px;line-height:16px;color:#2b2b33;font-weight:normal;">Usługa</div>
<div class="t" style="left:468.8px;top:462.54999999999995px;font-size:12.3px;line-height:16px;color:#2b2b33;font-weight:normal;">2025/35</div>
<div class="t" style="left:803.75px;top:462.54999999999995px;font-size:11.85px;line-height:16px;color:#2b2b33;font-weight:normal;">Portal</div>
<div class="t" style="left:938.3px;top:462.54999999999995px;font-size:11.85px;line-height:16px;color:#2b2b33;font-weight:normal;">Admin Admin</div>
<div class="t" style="left:1073.5px;top:462.54999999999995px;font-size:12px;line-height:16px;color:#2b2b33;font-weight:normal;">-</div>
<div class="t" style="left:1303.9px;top:462.54999999999995px;font-size:11.85px;line-height:16px;color:#2b2b33;font-weight:normal;">Nadanie uprawnień/dostępu</div>
<div class="t" style="left:1770.8px;top:462.54999999999995px;font-size:11.9px;line-height:16px;color:#2b2b33;font-weight:normal;">07.03.2025 09:25:18</div>
<div class="abs" style="left:287px;top:489.3px;width:1589px;height:36.2px;background:#d0e3ef"></div>
<div class="abs" style="left:1765px;top:489.3px;width:111px;height:36.2px;background:#cde0ea"></div>
<div class="abs" style="left:287px;top:488.8px;width:1589px;height:1px;background:#e4edf2"></div>
<div class="abs" style="left:294px;top:501.2px;width:12px;height:12px;background:#fff;border:1.3px solid #7c79ee;border-radius:3px"></div>
<div class="t" style="left:333.7px;top:498.79999999999995px;font-size:11.7px;line-height:16px;color:#2b2b33;font-weight:normal;">Zadanie</div>
<div class="t" style="left:468.8px;top:498.79999999999995px;font-size:12.3px;line-height:16px;color:#2b2b33;font-weight:normal;">2025/7</div>
<div class="t" style="left:803.75px;top:498.79999999999995px;font-size:11.85px;line-height:16px;color:#2b2b33;font-weight:normal;">Portal</div>
<div class="t" style="left:938.3px;top:498.79999999999995px;font-size:11.85px;line-height:16px;color:#2b2b33;font-weight:normal;">Admin Admin</div>
<div class="t" style="left:1073.5px;top:498.79999999999995px;font-size:12px;line-height:16px;color:#2b2b33;font-weight:normal;">-</div>
<div class="t" style="left:1303.9px;top:498.79999999999995px;font-size:11.85px;line-height:16px;color:#2b2b33;font-weight:normal;">Zadanie</div>
<div class="t" style="left:1770.8px;top:498.79999999999995px;font-size:11.9px;line-height:16px;color:#2b2b33;font-weight:normal;">07.03.2025 09:23:53</div>
<div class="abs" style="left:287px;top:525.5px;width:1589px;height:36.2px;background:#d0e3ef"></div>
<div class="abs" style="left:1765px;top:525.5px;width:111px;height:36.2px;background:#cde0ea"></div>
<div class="abs" style="left:287px;top:525.0px;width:1589px;height:1px;background:#e4edf2"></div>
<div class="abs" style="left:294px;top:537.4px;width:12px;height:12px;background:#fff;border:1.3px solid #7c79ee;border-radius:3px"></div>
<div class="t" style="left:333.7px;top:535.0px;font-size:11.7px;line-height:16px;color:#2b2b33;font-weight:normal;">Usługa</div>
<div class="t" style="left:468.8px;top:535.0px;font-size:12.3px;line-height:16px;color:#2b2b33;font-weight:normal;">2025/34</div>
<div class="t" style="left:803.75px;top:535.0px;font-size:11.85px;line-height:16px;color:#2b2b33;font-weight:normal;">Portal</div>
<div class="t" style="left:1073.5px;top:535.0px;font-size:12px;line-height:16px;color:#2b2b33;font-weight:normal;">-</div>
<div class="t" style="left:1303.9px;top:535.0px;font-size:11.85px;line-height:16px;color:#2b2b33;font-weight:normal;">Pakiet MS Office</div>
<div class="t" style="left:1770.8px;top:535.0px;font-size:11.9px;line-height:16px;color:#2b2b33;font-weight:normal;">07.03.2025 09:20:30</div>
<div class="abs" style="left:287px;top:561.7px;width:1589px;height:35.8px;background:#d0e3ef"></div>
<div class="abs" style="left:1765px;top:561.7px;width:111px;height:35.8px;background:#cde0ea"></div>
<div class="abs" style="left:287px;top:561.2px;width:1589px;height:1px;background:#e4edf2"></div>
<div class="abs" style="left:294px;top:573.4px;width:12px;height:12px;background:#fff;border:1.3px solid #7c79ee;border-radius:3px"></div>
<div class="t" style="left:333.7px;top:571.0px;font-size:11.7px;line-height:16px;color:#2b2b33;font-weight:normal;">Zadanie</div>
<div class="t" style="left:468.8px;top:571.0px;font-size:12.3px;line-height:16px;color:#2b2b33;font-weight:normal;">2025/6</div>
<div class="t" style="left:803.75px;top:571.0px;font-size:11.85px;line-height:16px;color:#2b2b33;font-weight:normal;">Portal</div>
<div class="t" style="left:938.3px;top:571.0px;font-size:11.85px;line-height:16px;color:#2b2b33;font-weight:normal;">Admin Admin</div>
<div class="t" style="left:1073.5px;top:571.0px;font-size:12px;line-height:16px;color:#2b2b33;font-weight:normal;">-</div>
<div class="t" style="left:1303.9px;top:571.0px;font-size:11.85px;line-height:16px;color:#2b2b33;font-weight:normal;">Zadanie</div>
<div class="t" style="left:1770.8px;top:571.0px;font-size:11.9px;line-height:16px;color:#2b2b33;font-weight:normal;">07.03.2025 09:19:53</div>
<div class="abs" style="left:287px;top:597.5px;width:1589px;height:35.9px;background:#d0e3ef"></div>
<div class="abs" style="left:1765px;top:597.5px;width:111px;height:35.9px;background:#cde0ea"></div>
<div class="abs" style="left:287px;top:597.0px;width:1589px;height:1px;background:#e4edf2"></div>
<div class="abs" style="left:294px;top:609.2px;width:12px;height:12px;background:#fff;border:1.3px solid #7c79ee;border-radius:3px"></div>
<div class="t" style="left:333.7px;top:606.85px;font-size:11.7px;line-height:16px;color:#2b2b33;font-weight:normal;">Zadanie</div>
<div class="t" style="left:468.8px;top:606.85px;font-size:12.3px;line-height:16px;color:#2b2b33;font-weight:normal;">2025/5</div>
<div class="t" style="left:803.75px;top:606.85px;font-size:11.85px;line-height:16px;color:#2b2b33;font-weight:normal;">Portal</div>
<div class="t" style="left:938.3px;top:606.85px;font-size:11.85px;line-height:16px;color:#2b2b33;font-weight:normal;">Admin Admin</div>
<div class="t" style="left:1073.5px;top:606.85px;font-size:12px;line-height:16px;color:#2b2b33;font-weight:normal;">-</div>
<div class="t" style="left:1303.9px;top:606.85px;font-size:11.85px;line-height:16px;color:#2b2b33;font-weight:normal;">Zadanie</div>
<div class="t" style="left:1770.8px;top:606.85px;font-size:11.9px;line-height:16px;color:#2b2b33;font-weight:normal;">07.03.2025 09:19:39</div>
<div class="abs" style="left:287px;top:633.4px;width:1589px;height:36.0px;background:#f8f8fb"></div>
<div class="abs" style="left:1765px;top:633.4px;width:111px;height:36.0px;background:#f2f2f5"></div>
<div class="abs" style="left:294px;top:645.2px;width:12px;height:12px;background:#fff;border:1.3px solid #7c79ee;border-radius:3px"></div>
<div class="t" style="left:333.7px;top:642.8px;font-size:11.7px;line-height:16px;color:#2b2b33;font-weight:normal;">Incydent</div>
<div class="t" style="left:468.8px;top:642.8px;font-size:12.3px;line-height:16px;color:#2b2b33;font-weight:normal;">Incident/211/2025/3/6</div>
<div class="t" style="left:803.75px;top:642.8px;font-size:11.85px;line-height:16px;color:#2b2b33;font-weight:normal;">Portal</div>
<div class="t" style="left:938.3px;top:642.8px;font-size:11.85px;line-height:16px;color:#2b2b33;font-weight:normal;">Admin Admin</div>
<div class="abs" style="left:1073px;top:641.1px;width:84px;height:22px;background:#bfcebf;clip-path:polygon(5.3px 0,78.7px 0,84px 50%,78.7px 100%,5.3px 100%,0 50%)"></div>
<div class="t" style="left:1073px;top:644.5999999999999px;font-size:11px;line-height:16px;color:#2a2b36;font-weight:bold;-webkit-text-stroke:0.2px #2a2b36;width:84px;text-align:center">Zamknięte</div>
<div class="t" style="left:1303.9px;top:642.8px;font-size:11.85px;line-height:16px;color:#2b2b33;font-weight:normal;">Zgłoszenie anonimowe</div>
<div class="t" style="left:1770.8px;top:642.8px;font-size:11.9px;line-height:16px;color:#2b2b33;font-weight:normal;">06.03.2025 12:22:18</div>
<div class="abs" style="left:287px;top:669.4px;width:1589px;height:35.8px;background:#d0e3ef"></div>
<div class="abs" style="left:1765px;top:669.4px;width:111px;height:35.8px;background:#cde0ea"></div>
<div class="abs" style="left:294px;top:681.1px;width:12px;height:12px;background:#fff;border:1.3px solid #7c79ee;border-radius:3px"></div>
<div class="t" style="left:333.7px;top:678.6999999999999px;font-size:11.7px;line-height:16px;color:#2b2b33;font-weight:normal;">Incydent</div>
<div class="t" style="left:468.8px;top:678.6999999999999px;font-size:12.3px;line-height:16px;color:#2b2b33;font-weight:normal;">Incident/210/2025/3/6</div>
<div class="t" style="left:803.75px;top:678.6999999999999px;font-size:11.85px;line-height:16px;color:#2b2b33;font-weight:normal;">Portal</div>
<div class="t" style="left:938.3px;top:678.6999999999999px;font-size:11.85px;line-height:16px;color:#2b2b33;font-weight:normal;">Admin Admin</div>
<div class="abs" style="left:1073px;top:676.5px;width:84px;height:22px;background:#258878;clip-path:polygon(5.3px 0,78.7px 0,84px 50%,78.7px 100%,5.3px 100%,0 50%)"></div>
<div class="t" style="left:1073px;top:679.9999999999999px;font-size:11px;line-height:16px;color:#ffffff;font-weight:bold;-webkit-text-stroke:0.3px #ffffff;width:84px;text-align:center">Nowe</div>
<div class="t" style="left:1303.9px;top:678.6999999999999px;font-size:11.85px;line-height:16px;color:#2b2b33;font-weight:normal;">Zgłoszenie anonimowe</div>
<div class="t" style="left:1770.8px;top:678.6999999999999px;font-size:11.9px;line-height:16px;color:#2b2b33;font-weight:normal;">06.03.2025 12:11:54</div>
<div class="abs" style="left:287px;top:705.2px;width:1589px;height:36.0px;background:#d0e3ef"></div>
<div class="abs" style="left:1765px;top:705.2px;width:111px;height:36.0px;background:#cde0ea"></div>
<div class="abs" style="left:287px;top:704.7px;width:1589px;height:1px;background:#e4edf2"></div>
<div class="abs" style="left:294px;top:717.0px;width:12px;height:12px;background:#fff;border:1.3px solid #7c79ee;border-radius:3px"></div>
<div class="t" style="left:333.7px;top:714.6px;font-size:11.7px;line-height:16px;color:#2b2b33;font-weight:normal;">Incydent</div>
<div class="t" style="left:468.8px;top:714.6px;font-size:12.3px;line-height:16px;color:#2b2b33;font-weight:normal;">Incident/209/2025/3/6</div>
<div class="t" style="left:803.75px;top:714.6px;font-size:11.85px;line-height:16px;color:#2b2b33;font-weight:normal;">Portal</div>
<div class="t" style="left:938.3px;top:714.6px;font-size:11.85px;line-height:16px;color:#2b2b33;font-weight:normal;">Admin Admin</div>
<div class="abs" style="left:1073px;top:712.4px;width:84px;height:22px;background:#258878;clip-path:polygon(5.3px 0,78.7px 0,84px 50%,78.7px 100%,5.3px 100%,0 50%)"></div>
<div class="t" style="left:1073px;top:715.9px;font-size:11px;line-height:16px;color:#ffffff;font-weight:bold;-webkit-text-stroke:0.3px #ffffff;width:84px;text-align:center">Nowe</div>
<div class="t" style="left:1303.9px;top:714.6px;font-size:11.85px;line-height:16px;color:#2b2b33;font-weight:normal;">Zgłoszenie anonimowe</div>
<div class="t" style="left:1770.8px;top:714.6px;font-size:11.9px;line-height:16px;color:#2b2b33;font-weight:normal;">06.03.2025 12:08:16</div>
<div class="abs" style="left:287px;top:741.2px;width:1589px;height:36.3px;background:#d0e3ef"></div>
<div class="abs" style="left:1765px;top:741.2px;width:111px;height:36.3px;background:#cde0ea"></div>
<div class="abs" style="left:287px;top:740.7px;width:1589px;height:1px;background:#e4edf2"></div>
<div class="abs" style="left:294px;top:753.1px;width:12px;height:12px;background:#fff;border:1.3px solid #7c79ee;border-radius:3px"></div>
<div class="t" style="left:333.7px;top:750.75px;font-size:11.7px;line-height:16px;color:#2b2b33;font-weight:normal;">Incydent</div>
<div class="t" style="left:468.8px;top:750.75px;font-size:12.3px;line-height:16px;color:#2b2b33;font-weight:normal;">Incident/208/2025/3/6</div>
<div class="t" style="left:803.75px;top:750.75px;font-size:11.85px;line-height:16px;color:#2b2b33;font-weight:normal;">Portal</div>
<div class="t" style="left:938.3px;top:750.75px;font-size:11.85px;line-height:16px;color:#2b2b33;font-weight:normal;">Admin Admin</div>
<div class="abs" style="left:1073px;top:748.5px;width:84px;height:22px;background:#258878;clip-path:polygon(5.3px 0,78.7px 0,84px 50%,78.7px 100%,5.3px 100%,0 50%)"></div>
<div class="t" style="left:1073px;top:752.05px;font-size:11px;line-height:16px;color:#ffffff;font-weight:bold;-webkit-text-stroke:0.3px #ffffff;width:84px;text-align:center">Nowe</div>
<div class="t" style="left:1303.9px;top:750.75px;font-size:11.85px;line-height:16px;color:#2b2b33;font-weight:normal;">Zgłoszenie anonimowe</div>
<div class="t" style="left:1770.8px;top:750.75px;font-size:11.9px;line-height:16px;color:#2b2b33;font-weight:normal;">06.03.2025 12:06:40</div>
<div class="abs" style="left:287px;top:777.5px;width:1589px;height:36.3px;background:#d0e3ef"></div>
<div class="abs" style="left:1765px;top:777.5px;width:111px;height:36.3px;background:#cde0ea"></div>
<div class="abs" style="left:287px;top:777.0px;width:1589px;height:1px;background:#e4edf2"></div>
<div class="abs" style="left:294px;top:789.4px;width:12px;height:12px;background:#fff;border:1.3px solid #7c79ee;border-radius:3px"></div>
<div class="t" style="left:333.7px;top:787.05px;font-size:11.7px;line-height:16px;color:#2b2b33;font-weight:normal;">Incydent</div>
<div class="t" style="left:468.8px;top:787.05px;font-size:12.3px;line-height:16px;color:#2b2b33;font-weight:normal;">Incident/207/2025/3/6</div>
<div class="t" style="left:803.75px;top:787.05px;font-size:11.85px;line-height:16px;color:#2b2b33;font-weight:normal;">Portal</div>
<div class="t" style="left:938.3px;top:787.05px;font-size:11.85px;line-height:16px;color:#2b2b33;font-weight:normal;">Admin Admin</div>
<div class="abs" style="left:1073px;top:784.8px;width:84px;height:22px;background:#258878;clip-path:polygon(5.3px 0,78.7px 0,84px 50%,78.7px 100%,5.3px 100%,0 50%)"></div>
<div class="t" style="left:1073px;top:788.3499999999999px;font-size:11px;line-height:16px;color:#ffffff;font-weight:bold;-webkit-text-stroke:0.3px #ffffff;width:84px;text-align:center">Nowe</div>
<div class="t" style="left:1303.9px;top:787.05px;font-size:11.85px;line-height:16px;color:#2b2b33;font-weight:normal;">Zgłoszenie anonimowe</div>
<div class="t" style="left:1770.8px;top:787.05px;font-size:11.9px;line-height:16px;color:#2b2b33;font-weight:normal;">06.03.2025 11:55:26</div>
<div class="abs" style="left:287px;top:813.8px;width:1589px;height:36.4px;background:#d0e3ef"></div>
<div class="abs" style="left:1765px;top:813.8px;width:111px;height:36.4px;background:#cde0ea"></div>
<div class="abs" style="left:287px;top:813.3px;width:1589px;height:1px;background:#e4edf2"></div>
<div class="abs" style="left:294px;top:825.8px;width:12px;height:12px;background:#fff;border:1.3px solid #7c79ee;border-radius:3px"></div>
<div class="t" style="left:333.7px;top:823.4px;font-size:11.7px;line-height:16px;color:#2b2b33;font-weight:normal;">Incydent</div>
<div class="t" style="left:468.8px;top:823.4px;font-size:12.3px;line-height:16px;color:#2b2b33;font-weight:normal;">Incident/206/2025/3/6</div>
<div class="t" style="left:803.75px;top:823.4px;font-size:11.85px;line-height:16px;color:#2b2b33;font-weight:normal;">Portal</div>
<div class="t" style="left:938.3px;top:823.4px;font-size:11.85px;line-height:16px;color:#2b2b33;font-weight:normal;">Admin Admin</div>
<div class="abs" style="left:1073px;top:821.2px;width:84px;height:22px;background:#258878;clip-path:polygon(5.3px 0,78.7px 0,84px 50%,78.7px 100%,5.3px 100%,0 50%)"></div>
<div class="t" style="left:1073px;top:824.6999999999999px;font-size:11px;line-height:16px;color:#ffffff;font-weight:bold;-webkit-text-stroke:0.3px #ffffff;width:84px;text-align:center">Nowe</div>
<div class="t" style="left:1303.9px;top:823.4px;font-size:11.85px;line-height:16px;color:#2b2b33;font-weight:normal;">Zgłoszenie anonimowe</div>
<div class="t" style="left:1770.8px;top:823.4px;font-size:11.9px;line-height:16px;color:#2b2b33;font-weight:normal;">06.03.2025 11:52:52</div>
<div class="abs" style="left:287px;top:850.2px;width:1589px;height:36.3px;background:#d0e3ef"></div>
<div class="abs" style="left:1765px;top:850.2px;width:111px;height:36.3px;background:#cde0ea"></div>
<div class="abs" style="left:287px;top:849.7px;width:1589px;height:1px;background:#e4edf2"></div>
<div class="abs" style="left:294px;top:862.1px;width:12px;height:12px;background:#fff;border:1.3px solid #7c79ee;border-radius:3px"></div>
<div class="t" style="left:333.7px;top:859.75px;font-size:11.7px;line-height:16px;color:#2b2b33;font-weight:normal;">Incydent</div>
<div class="t" style="left:468.8px;top:859.75px;font-size:12.3px;line-height:16px;color:#2b2b33;font-weight:normal;">Incident/205/2025/3/6</div>
<div class="t" style="left:803.75px;top:859.75px;font-size:11.85px;line-height:16px;color:#2b2b33;font-weight:normal;">Portal</div>
<div class="t" style="left:938.3px;top:859.75px;font-size:11.85px;line-height:16px;color:#2b2b33;font-weight:normal;">Admin Admin</div>
<div class="abs" style="left:1073px;top:857.5px;width:84px;height:22px;background:#258878;clip-path:polygon(5.3px 0,78.7px 0,84px 50%,78.7px 100%,5.3px 100%,0 50%)"></div>
<div class="t" style="left:1073px;top:861.05px;font-size:11px;line-height:16px;color:#ffffff;font-weight:bold;-webkit-text-stroke:0.3px #ffffff;width:84px;text-align:center">Nowe</div>
<div class="t" style="left:1303.9px;top:859.75px;font-size:11.85px;line-height:16px;color:#2b2b33;font-weight:normal;">Zgłoszenie anonimowe</div>
<div class="t" style="left:1770.8px;top:859.75px;font-size:11.9px;line-height:16px;color:#2b2b33;font-weight:normal;">06.03.2025 11:51:59</div>
<div class="abs" style="left:287px;top:886.5px;width:1589px;height:36.1px;background:#d0e3ef"></div>
<div class="abs" style="left:1765px;top:886.5px;width:111px;height:36.1px;background:#cde0ea"></div>
<div class="abs" style="left:287px;top:886.0px;width:1589px;height:1px;background:#e4edf2"></div>
<div class="abs" style="left:294px;top:898.3px;width:12px;height:12px;background:#fff;border:1.3px solid #7c79ee;border-radius:3px"></div>
<div class="t" style="left:333.7px;top:895.9499999999999px;font-size:11.7px;line-height:16px;color:#2b2b33;font-weight:normal;">Usługa</div>
<div class="t" style="left:468.8px;top:895.9499999999999px;font-size:12.3px;line-height:16px;color:#2b2b33;font-weight:normal;">2025/33</div>
<div class="t" style="left:803.75px;top:895.9499999999999px;font-size:11.85px;line-height:16px;color:#2b2b33;font-weight:normal;">Portal</div>
<div class="t" style="left:938.3px;top:895.9499999999999px;font-size:11.85px;line-height:16px;color:#2b2b33;font-weight:normal;">Admin Admin</div>
<div class="t" style="left:1073.5px;top:895.9499999999999px;font-size:12px;line-height:16px;color:#2b2b33;font-weight:normal;">-</div>
<div class="t" style="left:1303.9px;top:895.9499999999999px;font-size:11.85px;line-height:16px;color:#2b2b33;font-weight:normal;">Program pocztowy</div>
<div class="t" style="left:1770.8px;top:895.9499999999999px;font-size:11.9px;line-height:16px;color:#2b2b33;font-weight:normal;">06.03.2025 09:12:20</div>
<svg style="left:0;top:0" width="1920" height="1000"><polyline fill="none" stroke="#fff" stroke-width="1.7" points="297.1,361.2 299.2,363.3 303,359.3"/><rect x="780" y="353.9" width="15.8" height="9.6" fill="#3a33d0" stroke="#9d9ae6" stroke-width="1.6"/><rect x="781.9" y="364.9" width="11.8" height="1.8" fill="#9d9ae6"/><polyline fill="none" stroke="#fff" stroke-width="1.7" points="297.1,398.7 299.2,400.8 303,396.8"/><rect x="780" y="391.4" width="15.8" height="9.6" fill="#3a33d0" stroke="#9d9ae6" stroke-width="1.6"/><rect x="781.9" y="402.4" width="11.8" height="1.8" fill="#9d9ae6"/><rect x="780" y="427.4" width="15.8" height="9.6" fill="#3a33d0" stroke="#9d9ae6" stroke-width="1.6"/><rect x="781.9" y="438.4" width="11.8" height="1.8" fill="#9d9ae6"/><rect x="780" y="463.5" width="15.8" height="9.6" fill="#3a33d0" stroke="#9d9ae6" stroke-width="1.6"/><rect x="781.9" y="474.5" width="11.8" height="1.8" fill="#9d9ae6"/><rect x="780" y="499.8" width="15.8" height="9.6" fill="#3a33d0" stroke="#9d9ae6" stroke-width="1.6"/><rect x="781.9" y="510.8" width="11.8" height="1.8" fill="#9d9ae6"/><rect x="780" y="536.0" width="15.8" height="9.6" fill="#3a33d0" stroke="#9d9ae6" stroke-width="1.6"/><rect x="781.9" y="547.0" width="11.8" height="1.8" fill="#9d9ae6"/><rect x="780" y="572.0" width="15.8" height="9.6" fill="#3a33d0" stroke="#9d9ae6" stroke-width="1.6"/><rect x="781.9" y="583.0" width="11.8" height="1.8" fill="#9d9ae6"/><rect x="780" y="607.9" width="15.8" height="9.6" fill="#3a33d0" stroke="#9d9ae6" stroke-width="1.6"/><rect x="781.9" y="618.9" width="11.8" height="1.8" fill="#9d9ae6"/><rect x="780" y="643.8" width="15.8" height="9.6" fill="#3a33d0" stroke="#9d9ae6" stroke-width="1.6"/><rect x="781.9" y="654.8" width="11.8" height="1.8" fill="#9d9ae6"/><circle cx="744.5" cy="646.0" r="3.6" fill="#d8393f"/><path fill="#d8393f" d="M738,656.8 v-1.2 a4.4,4.4 0 0 1 4.4,-4.4 h4.2 a4.4,4.4 0 0 1 4.4,4.4 v1.2z"/><path fill="#f8f8fb" d="M743.9,651.2 h1.2 l0.4,1.4 -0.5,3.4 h-1 l-0.5,-3.4z"/><rect x="780" y="679.7" width="15.8" height="9.6" fill="#3a33d0" stroke="#9d9ae6" stroke-width="1.6"/><rect x="781.9" y="690.7" width="11.8" height="1.8" fill="#9d9ae6"/><rect x="780" y="715.6" width="15.8" height="9.6" fill="#3a33d0" stroke="#9d9ae6" stroke-width="1.6"/><rect x="781.9" y="726.6" width="11.8" height="1.8" fill="#9d9ae6"/><rect x="780" y="751.8" width="15.8" height="9.6" fill="#3a33d0" stroke="#9d9ae6" stroke-width="1.6"/><rect x="781.9" y="762.8" width="11.8" height="1.8" fill="#9d9ae6"/><rect x="780" y="788.0" width="15.8" height="9.6" fill="#3a33d0" stroke="#9d9ae6" stroke-width="1.6"/><rect x="781.9" y="799.0" width="11.8" height="1.8" fill="#9d9ae6"/><rect x="780" y="824.4" width="15.8" height="9.6" fill="#3a33d0" stroke="#9d9ae6" stroke-width="1.6"/><rect x="781.9" y="835.4" width="11.8" height="1.8" fill="#9d9ae6"/><rect x="780" y="860.8" width="15.8" height="9.6" fill="#3a33d0" stroke="#9d9ae6" stroke-width="1.6"/><rect x="781.9" y="871.8" width="11.8" height="1.8" fill="#9d9ae6"/><rect x="780" y="896.9" width="15.8" height="9.6" fill="#3a33d0" stroke="#9d9ae6" stroke-width="1.6"/><rect x="781.9" y="907.9" width="11.8" height="1.8" fill="#9d9ae6"/></svg>
</div></div>
<div class="abs" style="left:1876px;top:342px;width:10px;height:569px;background:#e8ebfd"></div>
<div class="abs" style="left:1877.9px;top:354.8px;width:6.2px;height:182px;background:#b9bdcb;border-radius:3.1px"></div>
<svg style="left:0;top:0" width="1920" height="911"><polygon fill="#b9bdcb" points="1877.8,350 1884,350 1880.9,345.2"/><polygon fill="#b9bdcb" points="1877.8,895 1884,895 1880.9,899.5"/></svg>
<div class="abs" style="left:287px;top:902px;width:1589px;height:9px;background:#e8ebfd"></div>
<div class="abs" style="left:300px;top:904px;width:1342px;height:5.8px;background:#b9bdcb;border-radius:3px"></div>
<svg style="left:0;top:0" width="1920" height="911"><polygon fill="#b9bdcb" points="295,903.5 295,909.5 291,906.5"/><polygon fill="#b9bdcb" points="1871,903.5 1871,909.5 1875,906.5"/></svg>
<div class="abs" style="left:282.8px;top:348.4px;width:37.8px;height:63.4px;box-shadow:inset 0 0 5px 2px rgba(70,80,95,0.38)"></div>
<div class="abs" style="left:278.7px;top:344.4px;width:45.9px;height:71.6px;border:4.2px solid #8dd43f;border-radius:8px"></div>
<div class="abs" style="left:1905px;top:0;width:15px;height:911px;background:#fafafa"></div>
<div class="abs" style="left:1908px;top:18px;width:9px;height:828px;background:#8a8a8a;border-radius:4.5px"></div>
<svg style="left:0;top:0" width="1920" height="911"><polygon fill="#8a8a8a" points="1908,11.8 1917,11.8 1912.5,5"/><polygon fill="#8a8a8a" points="1908,900 1917,900 1912.5,906.7"/></svg>
<div class="abs" style="left:625.7px;top:121.4px;width:199.7px;height:122.5px;background:#8dd43f;border-radius:8px;box-shadow:2px 2px 7px rgba(0,0,0,0.18)"></div>
<div class="abs" style="left:629.7px;top:125.7px;width:191.7px;height:114.2px;background:#fff;border-radius:3px;box-shadow:inset 0 0 6px 1px rgba(0,0,0,0.22)"></div>
<div class="abs" style="left:629.7px;top:125.7px;width:188.5px;height:22.3px;background:#fff;border-bottom:3px solid #d9dbdb;box-shadow:inset 0 3px 4px -1px rgba(0,0,0,0.28), inset -3px 0 4px -1px rgba(0,0,0,0.2)"></div>
<div class="abs" style="left:818.2px;top:126px;width:2.5px;height:113px;background:#d4d5d8"></div>
<div class="t" style="left:641.7px;top:127.69999999999999px;font-size:11.7px;line-height:16px;color:#2b2b3a;font-weight:normal;">Przypisz do mnie</div>
<div class="t" style="left:641.7px;top:150.9px;font-size:11.7px;line-height:16px;color:#2b2b3a;font-weight:normal;">Przypisz opiekuna</div>
<div class="t" style="left:641.7px;top:175.0px;font-size:11.7px;line-height:16px;color:#2b2b3a;font-weight:normal;">Przypisz grupę opiekunów</div>
<div class="t" style="left:641.7px;top:197.6px;font-size:11.7px;line-height:16px;color:#2b2b3a;font-weight:normal;">Przypisz dokument</div>
<div class="t" style="left:641.7px;top:220.7px;font-size:11.7px;line-height:16px;color:#2b2b3a;font-weight:normal;">Usuń</div>
</body></html>
